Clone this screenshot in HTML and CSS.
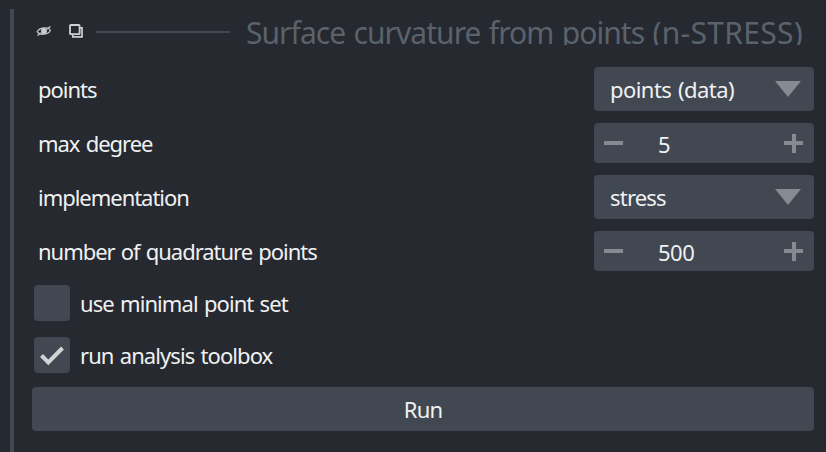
FILE: index.html
```html
<!DOCTYPE html>
<html lang="en">
<head>
<meta charset="utf-8">
<title>Surface curvature</title>
<link rel="stylesheet" href="styles.css">
</head>
<body>
<main class="panel">
  <header class="head">
    <svg class="eye" width="16" height="14" viewBox="0 0 16 14"><path d="M1.2 7.6C3.5 3.8 11.8 2 14.4 6.2C12.5 10.6 4 12 1.2 7.6Z" fill="none" stroke="#c4c6c9" stroke-width="1.2"/><circle cx="8" cy="7" r="2.9" fill="#d0d1d3"/><path d="M1.5 11.5L14.5 2.5" stroke="#c4c6c9" stroke-width="1.4"/></svg>
    <svg class="copy" width="14" height="14" viewBox="0 0 14 14" fill="none" stroke="#cfd0d2"><rect x="1" y="1" width="9.6" height="9.2" rx=".8" stroke-width="1.8"/><path d="M11 3.8H13V12.9H3.8V11" stroke-width="1.7"/></svg>
    <span class="rule"></span>
    <h1 class="title">Surface curvature from points <span class="method">(n-STRESS)</span></h1>
  </header>
  <form class="form">
    <div class="row"><label class="label">points</label><div class="select"><span class="data">points (data)</span><svg width="26" height="16" viewBox="0 0 26 16"><path d="M0 0H26L13 16Z" fill="#868a91"/></svg></div></div>
    <div class="row"><label class="label">max degree</label><div class="spin"><i class="minus"></i><span class="value">5</span><i class="plus"></i></div></div>
    <div class="row"><label class="label">implementation</label><div class="select"><span class="method-name">stress</span><svg width="26" height="16" viewBox="0 0 26 16"><path d="M0 0H26L13 16Z" fill="#868a91"/></svg></div></div>
    <div class="row"><label class="label">number of quadrature points</label><div class="spin"><i class="minus"></i><span class="value">500</span><i class="plus"></i></div></div>
    <div class="check first"><span class="box"></span><span>use minimal point set</span></div>
    <div class="check"><span class="box"><svg width="36" height="36" viewBox="0 0 36 36"><path d="M7.5 18.5L14.3 25.5L28.5 11" fill="none" stroke="#d2d3d4" stroke-width="4"/></svg></span><span>run analysis toolbox</span></div>
    <button class="run" type="button">Run</button>
  </form>
</main>
</body>
</html>
```
FILE: styles.css
```css
* { box-sizing: border-box; }
body {
  margin: 0;
  height: 452px;
  padding: 9px 12px 0 10px;
  overflow: hidden;
  background: #262930;
  color: #f0f1f2;
  font: 22px/30px "Noto Sans", sans-serif;
  letter-spacing: -1.03px;
  word-spacing: 1.5px;
}
.panel { height: 443px; border-left: 4px solid #414851; padding-left: 18px; }
.head { display: flex; height: 58px; padding-left: 4px; }
.eye { margin-top: 15px; }
.copy { margin: 15px 0 0 17px; }
.rule { width: 134px; height: 2px; margin: 22px 0 0 13px; background: #414851; }
.title {
  flex: 1;
  height: 36px;
  margin: 0 0 0 16px;
  overflow: hidden;
  white-space: nowrap;
  color: #5a626c;
  font-size: 30px;
  font-weight: 400;
  line-height: 48px;
  letter-spacing: -0.95px;
}
.method { letter-spacing: 0.3px; }
.row { display: flex; align-items: center; justify-content: space-between; margin-bottom: 12px; }
.label { padding-left: 6px; }
.select, .spin { display: flex; align-items: center; width: 220px; background: #414851; border-radius: 4px; }
.select { height: 44px; padding: 0 13px 0 16px; justify-content: space-between; }
.data { letter-spacing: -0.55px; }
.method-name { letter-spacing: -0.8px; }
.spin { height: 40px; padding: 0 10px; }
.value { width: 142px; padding: 1px 0 0 35px; letter-spacing: -0.5px; }
.minus, .plus { width: 19px; height: 19px; background: linear-gradient(#868a91, #868a91) center / 19px 4px no-repeat; }
.plus { margin-left: 19px; background: linear-gradient(#868a91, #868a91) center / 19px 4px no-repeat, linear-gradient(#868a91, #868a91) center / 4px 19px no-repeat; }
.check { display: flex; align-items: center; gap: 10px; height: 36px; margin: 0 0 14px 2px; letter-spacing: -0.93px; }
.first { margin: 14px 0 16px 2px; }
.box { width: 36px; height: 36px; background: #414851; border-radius: 4px; }
.box svg { display: block; }
.run { display: block; width: 100%; height: 44px; padding: 0; border: 0; border-radius: 4px; background: #414851; color: inherit; font: inherit; letter-spacing: -0.8px; }
```
